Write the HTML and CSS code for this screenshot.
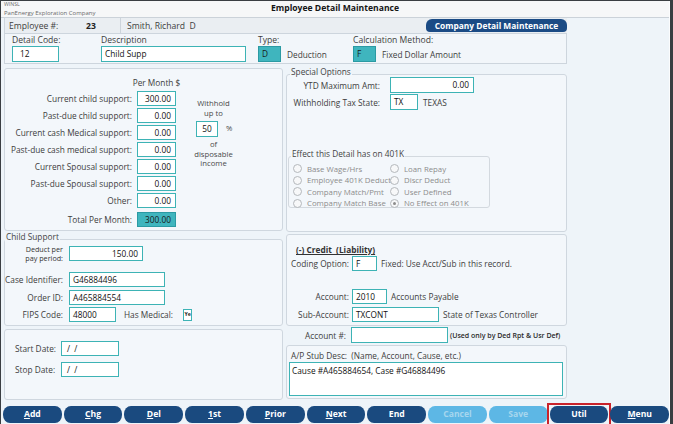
FILE: index.html
```html
<!DOCTYPE html>
<html>
<head>
<meta charset="utf-8">
<title>Employee Detail Maintenance</title>
<link rel="stylesheet" href="styles.css">
</head>
<body>
<div class="window">
  <div class="app">
    <header class="titlebar">
      <div class="brand">
        <div class="sys">WINSL</div>
        <div class="co">PanEnergy Exploration Company</div>
      </div>
      <div class="title">Employee Detail Maintenance</div>
      <div></div>
    </header>

    <main class="main">
      <div class="form">
        <div class="emp-row">
          <span class="emp-label">Employee #:</span>
          <span class="emp-num">23</span>
          <span class="emp-name">Smith, Richard&nbsp;&nbsp;D</span>
          <button class="company-btn">Company Detail Maintenance</button>
        </div>

        <div class="detail-box">
          <div class="fld">
            <div class="lbl">Detail Code:</div>
            <div class="fline"><div class="inp w-code">12</div></div>
          </div>
          <div class="fld">
            <div class="lbl">Description</div>
            <div class="fline"><div class="inp w-desc">Child Supp</div></div>
          </div>
          <div class="fld">
            <div class="lbl">Type:</div>
            <div class="fline"><div class="inp teal w-sm">D</div><span class="ftext">Deduction</span></div>
          </div>
          <div class="fld">
            <div class="lbl">Calculation Method:</div>
            <div class="fline"><div class="inp teal w-sm">F</div><span class="ftext">Fixed Dollar Amount</span></div>
          </div>
        </div>

        <div class="columns">
          <div class="col">
            <section class="panel per-month">
              <div class="pm-head">Per Month $</div>
              <div class="pm-lbl">Current child support:</div><div class="inp num pm-inp">300.00</div>
              <div class="pm-lbl">Past-due child support:</div><div class="inp num pm-inp">0.00</div>
              <div class="pm-lbl">Current cash Medical support:</div><div class="inp num pm-inp">0.00</div>
              <div class="pm-lbl">Past-due cash medical support:</div><div class="inp num pm-inp">0.00</div>
              <div class="pm-lbl">Current Spousal support:</div><div class="inp num pm-inp">0.00</div>
              <div class="pm-lbl">Past-due Spousal support:</div><div class="inp num pm-inp">0.00</div>
              <div class="pm-lbl">Other:</div><div class="inp num pm-inp">0.00</div>
              <div class="pm-lbl pm-total">Total Per Month:</div><div class="inp num teal pm-inp pm-total">300.00</div>
              <div class="withhold">
                <div>Withhold</div>
                <div>up to</div>
                <div class="wh-line"><div class="inp wh-inp">50</div><span class="pct">%</span></div>
                <div>of</div>
                <div>disposable</div>
                <div>income</div>
              </div>
            </section>

            <fieldset class="panel child">
              <legend>Child Support</legend>
              <div class="frow">
                <div class="flbl deduct">Deduct per<br>pay period:</div>
                <div class="inp num w-deduct">150.00</div>
              </div>
              <div class="frow mt11">
                <div class="flbl">Case Identifier:</div>
                <div class="inp w-case">G46884496</div>
              </div>
              <div class="frow mt3">
                <div class="flbl">Order ID:</div>
                <div class="inp w-case">A465884554</div>
              </div>
              <div class="frow mt2">
                <div class="flbl">FIPS Code:</div>
                <div class="inp w-fips">48000</div>
                <span class="hasmed">Has Medical:</span>
                <span class="ye">Ye</span>
              </div>
            </fieldset>

            <section class="panel dates">
              <div class="drow">
                <span class="dlbl">Start Date:</span>
                <div class="inp w-date">/&nbsp;&nbsp;/</div>
              </div>
              <div class="drow mt6">
                <span class="dlbl">Stop Date:</span>
                <div class="inp w-date">/&nbsp;&nbsp;/</div>
              </div>
            </section>
          </div>

          <div class="col">
            <fieldset class="panel special">
              <legend>Special Options</legend>
              <div class="srow first">
                <span class="slbl">YTD Maximum Amt:</span>
                <div class="inp num w-ytd">0.00</div>
              </div>
              <div class="srow">
                <span class="slbl">Withholding Tax State:</span>
                <div class="inp w-tx">TX</div>
                <span class="ftext">TEXAS</span>
              </div>
              <fieldset class="k401">
                <legend>Effect this Detail has on 401K</legend>
                <div class="k-grid">
                  <div class="radio"><span class="dot"></span>Base Wage/Hrs</div>
                  <div class="radio"><span class="dot"></span>Loan Repay</div>
                  <div class="radio"><span class="dot"></span>Employee 401K Deduct</div>
                  <div class="radio"><span class="dot"></span>Discr Deduct</div>
                  <div class="radio"><span class="dot"></span>Company Match/Pmt</div>
                  <div class="radio"><span class="dot"></span>User Defined</div>
                  <div class="radio"><span class="dot"></span>Company Match Base</div>
                  <div class="radio"><span class="dot on"></span>No Effect on 401K</div>
                </div>
              </fieldset>
            </fieldset>

            <section class="panel credit">
              <div class="credit-head">(-) Credit&nbsp;&nbsp;(Liability)</div>
              <div class="crow mt1">
                <span class="clbl">Coding Option:</span>
                <div class="inp w-f">F</div>
                <span class="ctext">Fixed: Use Acct/Sub in this record.</span>
              </div>
              <div class="crow mt18">
                <span class="clbl">Account:</span>
                <div class="inp w-acct">2010</div>
                <span class="ctext">Accounts Payable</span>
              </div>
              <div class="crow mt3">
                <span class="clbl">Sub-Account:</span>
                <div class="inp w-sub">TXCONT</div>
                <span class="ctext">State of Texas Controller</span>
              </div>
            </section>

            <div class="acct-row">
              <span class="clbl">Account #:</span>
              <div class="inp w-acctno"></div>
              <span class="note">(Used only by Ded Rpt &amp; Usr Def)</span>
            </div>

            <section class="panel stub">
              <div class="stub-lbl">A/P Stub Desc:&nbsp;&nbsp;(Name, Account, Cause, etc.)</div>
              <div class="inp stub-text">Cause #A465884654, Case #G46884496</div>
            </section>
          </div>
        </div>
      </div>
    </main>

    <nav class="buttons">
      <button class="btn"><u>A</u>dd</button>
      <button class="btn"><u>C</u>hg</button>
      <button class="btn"><u>D</u>el</button>
      <button class="btn"><u>1</u>st</button>
      <button class="btn"><u>P</u>rior</button>
      <button class="btn"><u>N</u>ext</button>
      <button class="btn">End</button>
      <button class="btn off">Cancel</button>
      <button class="btn off">Save</button>
      <div class="hot-wrap"><button class="btn">Util</button></div>
      <button class="btn"><u>M</u>enu</button>
    </nav>
  </div>
</div>
</body>
</html>
```

FILE: styles.css
```css
* { box-sizing: border-box; }
html, body { margin: 0; padding: 0; }
body {
  background: #34383c;
  font-family: "Open Sans", "Noto Sans", sans-serif;
  font-size: 8.3px;
  color: #3d3d3d;
}

.window {
  width: 673px;
  height: 424px;
  padding: 1px 3px 0 1px;
  background: #3a3e42;
  overflow: hidden;
}

.app {
  height: 423px;
  background: #eef4f9;
  border-right: 1px solid #fbfcfd;
  display: flex;
  flex-direction: column;
}

/* title bar */
.titlebar {
  height: 17px;
  flex: none;
  display: grid;
  grid-template-columns: 1fr auto 1fr;
  background: #f6f7f8;
  border-bottom: 1px solid #cbd2d9;
}
.brand { padding-left: 3px; color: #6a6a6a; line-height: 1; white-space: nowrap; }
.sys { font-size: 5.2px; margin-top: 1px; }
.co { font-size: 6px; margin-top: 3px; }
.title { font-weight: 700; font-size: 8.6px; color: #151515; line-height: 15px; }

/* main form */
.main { flex: 1; padding-left: 3px; }
.form { width: 563px; }

.emp-row {
  height: 15px;
  display: flex;
  align-items: center;
  background: #eaeef2;
  border-left: 1px solid #cfd6dd;
}
.emp-label { width: 81px; padding-left: 4px; font-size: 8.6px; }
.emp-num { width: 34px; font-weight: 700; font-size: 8.6px; color: #222; }
.emp-name {
  align-self: stretch;
  display: flex;
  align-items: center;
  padding-left: 6px;
  border-left: 1px solid #cdd4db;
  font-size: 8.6px;
}
.company-btn {
  margin-left: auto;
  width: 141px;
  height: 13px;
  border: 0;
  border-radius: 6px 6px 4px 4px;
  background: #1b4b85;
  color: #fff;
  font-family: inherit;
  font-weight: 700;
  font-size: 8.4px;
  line-height: 13px;
  padding: 0;
}

.detail-box {
  height: 31px;
  border: 1px solid #cdd5dd;
  background: #f2f6fa;
  display: grid;
  grid-template-columns: 89px 157px 95px auto;
  padding: 1px 0 0 7px;
}
.lbl { line-height: 10px; white-space: nowrap; font-size: 8.6px; }
.fline { display: flex; align-items: center; margin-top: 1px; }
.ftext { margin-left: 6px; white-space: nowrap; }

/* inputs */
.inp {
  height: 15px;
  border: 1px solid #3db3b5;
  background: #fff;
  color: #111;
  padding: 0 3px;
  line-height: 13px;
  white-space: nowrap;
  overflow: hidden;
  flex: none;
}
.num { text-align: right; padding-right: 4px; }
.teal { background: #3fb5be; border-color: #2b9aa3; color: #1a1a1a; }
.fline .inp { height: 16px; line-height: 14px; }
.w-code { width: 47px; padding-left: 7px; }
.w-desc { width: 145px; }
.w-sm { width: 23px; }

/* columns */
.columns {
  display: grid;
  grid-template-columns: 279px 281px;
  column-gap: 3px;
  margin-top: 3px;
}
.col { display: flex; flex-direction: column; }

.panel {
  border: 1px solid #cfd7df;
  border-radius: 3px;
  background: #f3f7fb;
  margin: 0;
  padding: 0;
  min-width: 0;
}
fieldset.panel legend {
  font-size: 8.3px;
  line-height: 10px;
  padding: 0 1px 4px;
  color: #444;
}

/* per month */
.per-month {
  height: 163px;
  margin-top: 1px;
  display: grid;
  grid-template-columns: 127px 39px 65px;
  grid-template-rows: 12px repeat(8, 15px);
  column-gap: 5px;
  row-gap: 2px;
  align-content: start;
  padding-top: 8px;
}
.pm-head {
  grid-column: 1 / 3;
  grid-row: 1;
  padding-left: 112px;
  margin-right: -20px;
  text-align: center;
  white-space: nowrap;
  line-height: 12px;
}
.pm-lbl { grid-column: 1; text-align: right; line-height: 15px; white-space: nowrap; }
.pm-inp { grid-column: 2; }
.pm-total { margin-top: 2px; }
.withhold {
  grid-column: 3;
  grid-row: 2 / span 7;
  align-self: start;
  padding-top: 8px;
  font-size: 7.7px;
  line-height: 9.5px;
  text-align: center;
  color: #4a4a4a;
}
.wh-line { display: flex; align-items: center; justify-content: center; margin: 3px 0 3px 0; padding-left: 1px; }
.wh-inp { width: 22px; height: 16px; line-height: 14px; text-align: center; font-size: 8.3px; }
.pct { margin-left: 8px; width: 6px; }

/* child support */
.child { height: 94px; margin-top: 1px; }
.frow { display: flex; align-items: center; height: 15px; }
.flbl { width: 58px; text-align: right; white-space: nowrap; margin-right: 6px; flex: none; }
.deduct { font-size: 7.2px; line-height: 9px; color: #333; }
.w-deduct { width: 74px; }
.w-case { width: 96px; }
.w-fips { width: 47px; }
.hasmed { margin-left: 8px; white-space: nowrap; }
.ye {
  margin-left: 10px;
  width: 9px;
  height: 12px;
  border: 1px solid #3db3b5;
  background: #fff;
  font-size: 5.2px;
  font-weight: 700;
  line-height: 9px;
  overflow: hidden;
  color: #222;
  padding-left: 0.5px;
}
.mt1 { margin-top: 1px; }
.mt2 { margin-top: 2px; }
.mt3 { margin-top: 3px; }
.mt6 { margin-top: 6px; }
.mt11 { margin-top: 11px; }
.mt18 { margin-top: 18px; }

/* dates */
.dates { height: 71px; margin-top: 3px; padding: 11px 0 0 10px; }
.drow { display: flex; align-items: center; height: 15px; }
.dlbl { width: 46px; white-space: nowrap; }
.w-date { width: 58px; padding-left: 5px; }

/* special options */
.special { height: 165px; }
.special > legend { padding: 0 1px 2px; margin-left: 3px; }
.srow { display: flex; align-items: center; height: 16px; margin-bottom: 1px; }
.srow.first { margin-top: -4px; }
.slbl { width: 93px; text-align: right; white-space: nowrap; margin-right: 10px; flex: none; }
.srow .inp { height: 16px; line-height: 14px; }
.w-ytd { width: 84px; }
.w-tx { width: 28px; }
.srow .ftext { margin-left: 5px; }

.k401 {
  margin: 39px 0 0 1px;
  width: 202px;
  height: 59px;
  border: 1px solid #d3d9df;
  border-radius: 3px;
  padding: 0;
  min-width: 0;
}
.k401 legend {
  font-size: 7.6px;
  line-height: 9px;
  padding: 0 1px 1px;
  margin-left: 2px;
  color: #8e8e8e;
}
.k-grid {
  display: grid;
  grid-template-columns: 97px 1fr;
  grid-auto-rows: 11.5px;
  padding-left: 4px;
}
.radio {
  display: flex;
  align-items: center;
  white-space: nowrap;
  font-size: 7.8px;
  color: #8c8c8c;
}
.dot {
  width: 9px;
  height: 9px;
  border: 1px solid #b4b8bc;
  border-radius: 50%;
  background: #f7f8f9;
  margin-right: 5px;
  flex: none;
  display: flex;
  align-items: center;
  justify-content: center;
}
.dot.on::after {
  content: "";
  width: 3px;
  height: 3px;
  border-radius: 50%;
  background: #8c8c8c;
}

/* credit */
.credit { height: 92px; margin-top: 2px; padding-top: 9px; }
.credit-head {
  padding-left: 9px;
  line-height: 11px;
  font-weight: 700;
  text-decoration: underline;
  color: #333;
}
.crow, .acct-row { display: flex; align-items: center; height: 15px; }
.clbl { width: 62px; text-align: right; white-space: nowrap; margin-right: 3px; flex: none; }
.ctext { margin-left: 4px; white-space: nowrap; }
.w-f { width: 25px; }
.w-acct { width: 35px; }
.w-sub { width: 87px; }

.acct-row { height: 16px; margin-top: 1px; padding-left: 0; }
.acct-row .clbl { padding-right: 2px; }
.w-acctno { width: 97px; height: 16px; }
.note { margin-left: 2px; font-size: 7px; font-weight: 600; color: #2a2a2a; white-space: nowrap; }

/* stub */
.stub { height: 54px; margin-top: 2px; padding: 4px 3px 0 2px; }
.stub-lbl { line-height: 11px; padding-left: 2px; white-space: nowrap; }
.stub-text {
  margin-top: 1px;
  height: 34px;
  width: 274px;
  padding: 2px 2px;
  line-height: 11px;
}

/* buttons */
.buttons {
  flex: none;
  height: 17px;
  margin-bottom: 1px;
  padding-left: 2px;
  display: flex;
  gap: 2px;
}
.btn {
  flex: 1;
  min-width: 0;
  height: 17px;
  border: 0;
  border-radius: 7px / 8px;
  background: #1a4a7f;
  color: #fff;
  font-family: inherit;
  font-weight: 700;
  font-size: 8.6px;
  padding: 0;
  line-height: 17px;
}
.btn u { text-decoration-thickness: 1px; text-underline-offset: 1px; }
.btn.off { background: #5db7e5; color: #a6d6ee; }
.hot-wrap {
  flex: 1;
  min-width: 0;
  display: flex;
  outline: 2px solid #c9232b;
  outline-offset: 1px;
}
```
